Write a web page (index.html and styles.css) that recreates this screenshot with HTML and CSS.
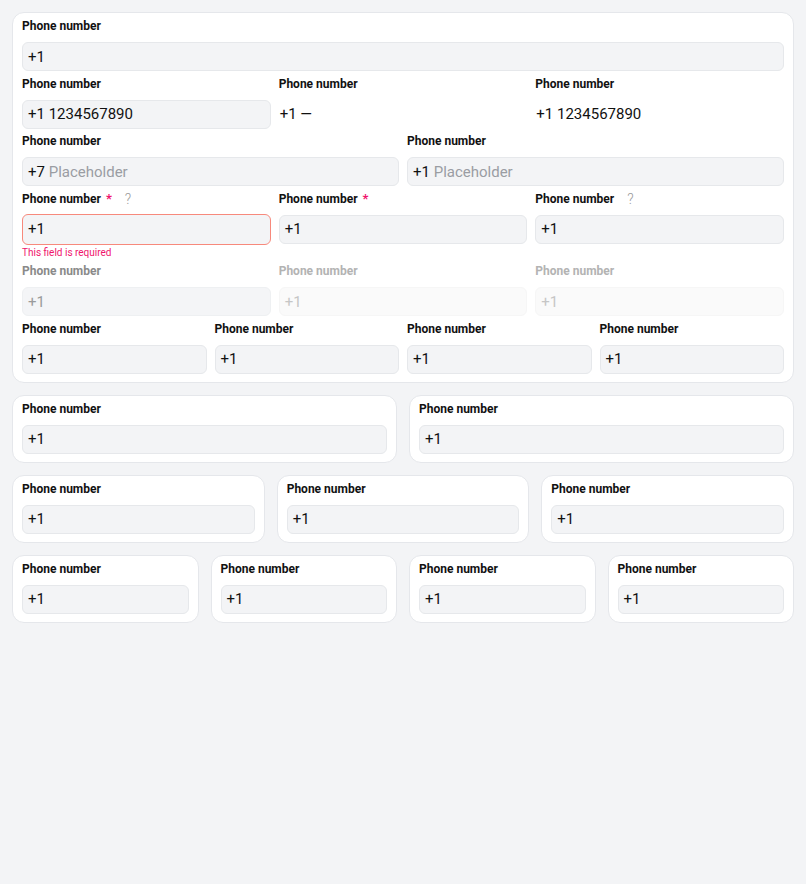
FILE: index.html
```html
<!DOCTYPE html>
<html>
<head>
<meta charset="utf-8">
<link rel="stylesheet" href="styles.css">
</head>
<body>
<div class="page">
  <div class="card stack">
    <div class="row c1">
      <div class="field"><div class="label">Phone number</div><div class="input">+1</div></div>
    </div>
    <div class="row c3">
      <div class="field"><div class="label">Phone number</div><div class="input">+1 1234567890</div></div>
      <div class="field"><div class="label">Phone number</div><div class="input plain">+1 —</div></div>
      <div class="field"><div class="label">Phone number</div><div class="input plain">+1 1234567890</div></div>
    </div>
    <div class="row c2">
      <div class="field"><div class="label">Phone number</div><div class="input">+7&nbsp;<span class="ph">Placeholder</span></div></div>
      <div class="field"><div class="label">Phone number</div><div class="input">+1&nbsp;<span class="ph">Placeholder</span></div></div>
    </div>
    <div class="row c3">
      <div class="field"><div class="label">Phone number<span class="req">*</span><span class="help">?</span></div><div class="input error">+1</div><div class="err-text">This field is required</div></div>
      <div class="field"><div class="label">Phone number<span class="req">*</span></div><div class="input">+1</div></div>
      <div class="field"><div class="label">Phone number<span class="help">?</span></div><div class="input">+1</div></div>
    </div>
    <div class="row c3">
      <div class="field dis"><div class="label">Phone number</div><div class="input">+1</div></div>
      <div class="field dis2"><div class="label">Phone number</div><div class="input">+1</div></div>
      <div class="field dis2"><div class="label">Phone number</div><div class="input">+1</div></div>
    </div>
    <div class="row c4">
      <div class="field"><div class="label">Phone number</div><div class="input">+1</div></div>
      <div class="field"><div class="label">Phone number</div><div class="input">+1</div></div>
      <div class="field"><div class="label">Phone number</div><div class="input">+1</div></div>
      <div class="field"><div class="label">Phone number</div><div class="input">+1</div></div>
    </div>
  </div>

  <div class="cards c2">
    <div class="card"><div class="label">Phone number</div><div class="input">+1</div></div>
    <div class="card"><div class="label">Phone number</div><div class="input">+1</div></div>
  </div>
  <div class="cards c3">
    <div class="card"><div class="label">Phone number</div><div class="input">+1</div></div>
    <div class="card"><div class="label">Phone number</div><div class="input">+1</div></div>
    <div class="card"><div class="label">Phone number</div><div class="input">+1</div></div>
  </div>
  <div class="cards c4">
    <div class="card"><div class="label">Phone number</div><div class="input">+1</div></div>
    <div class="card"><div class="label">Phone number</div><div class="input">+1</div></div>
    <div class="card"><div class="label">Phone number</div><div class="input">+1</div></div>
    <div class="card"><div class="label">Phone number</div><div class="input">+1</div></div>
  </div>
</div>
</body>
</html>
```
FILE: styles.css
```css
html, body {
  margin: 0;
  padding: 0;
  background: #f3f4f6;
  font-family: Roboto, "Liberation Sans", sans-serif;
  color: #111;
}
.page {
  padding: 12px;
  display: flex;
  flex-direction: column;
  gap: 12px;
}
.card {
  background: #fff;
  border: 1px solid #e5e7eb;
  border-radius: 12px;
  padding: 5px 9px 8px;
}
.stack {
  display: flex;
  flex-direction: column;
  gap: 4.6px;
}
.row, .cards {
  display: grid;
  gap: 8px;
}
.cards { gap: 12px; }
.c1 { grid-template-columns: 1fr; }
.c2 { grid-template-columns: 1fr 1fr; }
.c3 { grid-template-columns: 1fr 1fr 1fr; }
.c4 { grid-template-columns: 1fr 1fr 1fr 1fr; }
.field {
  display: flex;
  flex-direction: column;
  min-width: 0;
}
.label {
  font-size: 12px;
  line-height: 16px;
  height: 16px;
  font-weight: 700;
  color: #111;
  margin-bottom: 8px;
  display: flex;
  align-items: center;
  white-space: nowrap;
}
.req {
  color: #f0146c;
  margin-left: 5px;
  font-size: 13px;
}
.help {
  margin-left: 13px;
  color: #9a9a9a;
  font-weight: 300;
  font-size: 14px;
}
.input {
  box-sizing: border-box;
  height: 29px;
  border: 1px solid #e6e8eb;
  border-radius: 6px;
  background: #f3f4f6;
  padding: 0 5px;
  font-size: 15px;
  display: flex;
  align-items: center;
  color: #111;
  white-space: nowrap;
}
.input.plain {
  background: transparent;
  border-color: transparent;
  padding: 0;
}
.ph { color: #9a9da3; }
.input.error {
  border-color: #f7897c;
  height: 31px;
  margin-top: -1px;
  margin-bottom: -1px;
}
.err-text {
  color: #f0146c;
  font-size: 10px;
  line-height: 12px;
  height: 12px;
  margin-top: 3px;
}
.dis .label { color: #8a8a8a; }
.dis .input {
  background: #f4f5f7;
  border-color: #eef0f2;
  color: #9b9b9b;
}
.dis2 .label { color: #b3b3b3; }
.dis2 .input {
  background: #fafafa;
  border-color: #f6f6f6;
  color: #c6c6c6;
}
```
